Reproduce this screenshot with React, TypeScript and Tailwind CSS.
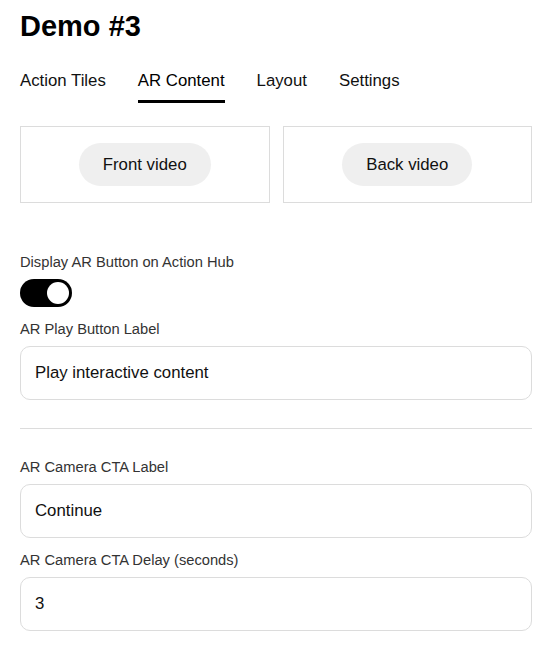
import { useState } from "react";

const tabs = ["Action Tiles", "AR Content", "Layout", "Settings"];

const Field = ({ label, value, className = "" }: { label: string; value: string; className?: string }) => (
  <div className={className}>
    <div className="text-[14.7px] leading-5 text-[#333]">{label}</div>
    <div className="mt-[7px] h-[54px] rounded-[10px] border border-[#dcdcdc] px-[14px] flex items-center text-[16.8px] text-[#111]">
      {value}
    </div>
  </div>
);

const App = () => {
  const [active, setActive] = useState("AR Content");
  const [showAr, setShowAr] = useState(true);

  return (
    <div className="min-h-screen bg-white px-5 pt-[9px] font-['Liberation_Sans',Arial,sans-serif] text-[#111]">
      <h1 className="text-[29px] leading-[34px] font-bold text-black">Demo #3</h1>

      <div className="mt-[26px] flex gap-8">
        {tabs.map((tab) => (
          <button
            key={tab}
            onClick={() => setActive(tab)}
            className={`text-[16.8px] leading-6 pb-[7px] border-b-[3px] ${
              active === tab ? "border-black text-black" : "border-transparent text-[#111]"
            }`}
          >
            {tab}
          </button>
        ))}
      </div>

      <div className="mt-[23px] grid grid-cols-2 gap-[13px]">
        {["Front video", "Back video"].map((label) => (
          <div key={label} className="border border-[#dcdcdc] p-4 flex justify-center">
            <button className="h-[43px] px-6 rounded-full bg-[#efefef] text-[16.8px] text-[#111]">{label}</button>
          </div>
        ))}
      </div>

      <div className="mt-[49px] text-[14.7px] leading-5 text-[#333]">Display AR Button on Action Hub</div>
      <button
        onClick={() => setShowAr(!showAr)}
        className={`mt-[7px] w-[52px] h-[28px] rounded-full p-[3px] flex ${
          showAr ? "bg-black justify-end" : "bg-[#ccc] justify-start"
        }`}
      >
        <span className="w-[22px] h-[22px] rounded-full bg-white" />
      </button>

      <Field label="AR Play Button Label" value="Play interactive content" className="mt-3" />

      <div className="mt-[28px] border-t border-[#dcdcdc]" />

      <Field label="AR Camera CTA Label" value="Continue" className="mt-[28px]" />
      <Field label="AR Camera CTA Delay (seconds)" value="3" className="mt-3" />
    </div>
  );
};

export default App;
